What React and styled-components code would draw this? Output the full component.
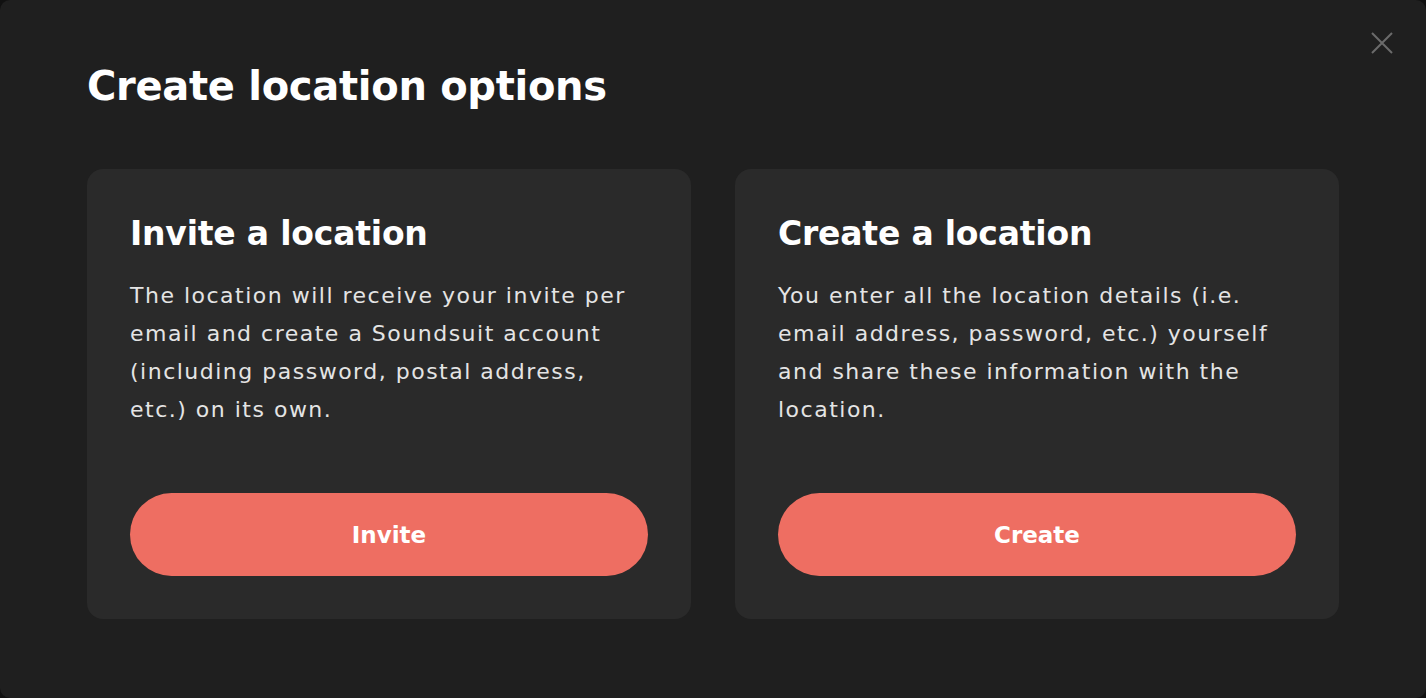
import React from 'react';
import styled, { createGlobalStyle } from 'styled-components';

const GlobalStyle = createGlobalStyle`
  html, body {
    margin: 0;
    padding: 0;
    background: #111111;
  }
  body {
    font-family: "DejaVu Sans", "Noto Sans", sans-serif;
  }
  * {
    box-sizing: border-box;
  }
`;

const Dialog = styled.div`
  position: relative;
  width: 1426px;
  height: 698px;
  background-color: #1f1f1f;
  border-radius: 10px;
  padding: 58px 87px 0 87px;
`;

const CloseButton = styled.button`
  position: absolute;
  top: 30px;
  right: 31px;
  width: 26px;
  height: 26px;
  padding: 0;
  background: none;
  border: none;
  cursor: pointer;
  display: flex;
  align-items: center;
  justify-content: center;
`;

const Title = styled.h1`
  margin: 0;
  color: #ffffff;
  font-size: 40px;
  font-weight: 700;
  line-height: 56px;
  letter-spacing: -0.3px;
`;

const Options = styled.div`
  display: grid;
  grid-template-columns: 604px 604px;
  gap: 44px;
  margin-top: 55px;
`;

const Card = styled.div`
  height: 450px;
  background-color: #2a2a2a;
  border-radius: 16px;
  padding: 41px 43px 43px 43px;
  display: flex;
  flex-direction: column;
`;

const CardTitle = styled.h2`
  margin: 0;
  color: #ffffff;
  font-size: 33px;
  font-weight: 700;
  line-height: 48px;
  letter-spacing: -0.2px;
`;

const CardText = styled.p`
  margin: 19px 0 0 0;
  color: #e4e4e4;
  font-size: 22px;
  font-weight: 400;
  line-height: 38px;
  letter-spacing: 1.5px;
`;

const ActionButton = styled.button`
  margin-top: auto;
  width: 100%;
  height: 83px;
  border: none;
  border-radius: 42px;
  background-color: #ee6e62;
  color: #ffffff;
  font-family: inherit;
  font-size: 23px;
  font-weight: 700;
  cursor: pointer;
`;

const options = [
  {
    title: 'Invite a location',
    text: 'The location will receive your invite per email and create a Soundsuit account (including password, postal address, etc.) on its own.',
    action: 'Invite',
  },
  {
    title: 'Create a location',
    text: 'You enter all the location details (i.e. email address, password, etc.) yourself and share these information with the location.',
    action: 'Create',
  },
];

const App = () => {
  return (
    <>
      <GlobalStyle />
      <Dialog>
        <CloseButton aria-label="Close">
          <svg width="24" height="24" viewBox="0 0 24 24" fill="none" stroke="#6b6b6b" strokeWidth="2">
            <path d="M2 2 L22 22 M22 2 L2 22" />
          </svg>
        </CloseButton>
        <Title>Create location options</Title>
        <Options>
          {options.map((option) => (
            <Card key={option.action}>
              <CardTitle>{option.title}</CardTitle>
              <CardText>{option.text}</CardText>
              <ActionButton>{option.action}</ActionButton>
            </Card>
          ))}
        </Options>
      </Dialog>
    </>
  );
};

export default App;
